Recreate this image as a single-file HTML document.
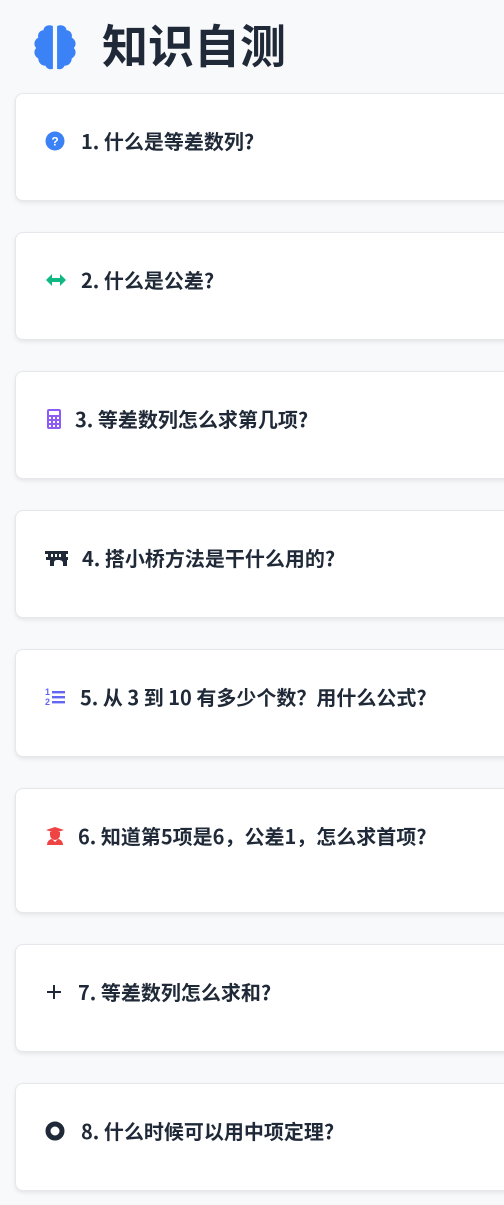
<!DOCTYPE html>
<html><head><meta charset="utf-8"><style>
body{margin:0;background:#f8f9fb;font-family:"Noto Sans CJK SC",sans-serif;width:504px;height:1205px;overflow:hidden;position:relative;color:#1f2937}
h1{position:absolute;left:102px;top:12px;margin:0;font-size:46px;line-height:64px;font-weight:700;color:#1f2937}
.brain{position:absolute;left:31px;top:23px}
.card{position:absolute;left:15px;width:520px;background:#fff;border:1px solid #e5e7eb;border-radius:8px;box-shadow:0 2px 4px rgba(0,0,0,.08)}
.q{position:absolute;top:33px;left:0;display:flex;align-items:center;font-size:20px;font-weight:700;line-height:28px;white-space:nowrap}
.q svg{position:absolute;left:29px;top:4px}
</style></head><body>
<svg class="brain" width="48" height="48" viewBox="0 0 46 46"><g fill="#3b82f6">
<path d="M21 3c-4-2-9 0-9 4-4 0-6 4-5 7-4 2-5 7-2 10-3 3-2 8 2 10 0 4 3 7 7 7 1 3 4 4 7 3z"/>
<path d="M25 3c4-2 9 0 9 4 4 0 6 4 5 7 4 2 5 7 2 10 3 3 2 8-2 10 0 4-3 7-7 7-1 3-4 4-7 3z"/></g></svg>
<h1>知识自测</h1>

<div class="card" style="top:93px;height:106px"><div class="q"><svg width="20" height="20" viewBox="0 0 20 20"><circle cx="10" cy="10" r="9.5" fill="#3b82f6"/><text x="10" y="14.5" font-size="12" font-weight="700" fill="#fff" text-anchor="middle" font-family="Liberation Sans">?</text></svg><span style="margin-left:65px">1. 什么是等差数列?</span></div></div>

<div class="card" style="top:232px;height:106px"><div class="q"><svg width="22" height="20" viewBox="0 0 22 20"><path d="M1 10l6-6v4h8V4l6 6-6 6v-4H7v4z" fill="#10b981"/></svg><span style="margin-left:65px">2. 什么是公差?</span></div></div>

<div class="card" style="top:371px;height:106px"><div class="q"><svg width="16" height="22" viewBox="0 0 16 22" style="left:30px;top:3px"><rect x="1" y="1" width="14" height="20" rx="2" fill="#8b5cf6"/><rect x="3" y="3" width="10" height="4" fill="#fff"/><g fill="#fff"><rect x="3" y="9" width="2" height="2"/><rect x="7" y="9" width="2" height="2"/><rect x="11" y="9" width="2" height="2"/><rect x="3" y="13" width="2" height="2"/><rect x="7" y="13" width="2" height="2"/><rect x="11" y="13" width="2" height="2"/><rect x="3" y="17" width="2" height="2"/><rect x="7" y="17" width="2" height="2"/><rect x="11" y="17" width="2" height="2"/></g></svg><span style="margin-left:59px">3. 等差数列怎么求第几项?</span></div></div>

<div class="card" style="top:510px;height:106px"><div class="q"><svg width="23" height="20" viewBox="0 0 23 20"><path d="M0 3h23v3h-2v3h2v3h-1v6h-4v-3c0-2-2-3-4.5-3S9 12 9 15v3H5v-6H1V9h2V6H0z M6 6v3h2V6z M10 6v3h2V6z M14 6v3h2V6z" fill="#1f2937" fill-rule="evenodd"/></svg><span style="margin-left:66px">4. 搭小桥方法是干什么用的?</span></div></div>

<div class="card" style="top:649px;height:106px"><div class="q"><svg width="20" height="20" viewBox="0 0 20 20"><text x="0" y="8" font-size="9" font-weight="700" fill="#6366f1" font-family="Liberation Sans">1</text><text x="0" y="18" font-size="9" font-weight="700" fill="#6366f1" font-family="Liberation Sans">2</text><rect x="7" y="4" width="13" height="2.4" fill="#6366f1"/><rect x="7" y="9" width="13" height="2.4" fill="#6366f1"/><rect x="7" y="14" width="13" height="2.4" fill="#6366f1"/></svg><span style="margin-left:64px">5. 从 3 到 10 有多少个数？用什么公式?</span></div></div>

<div class="card" style="top:788px;height:123px"><div class="q"><svg width="20" height="20" viewBox="0 0 20 20"><path d="M1 4l9-3 9 3-9 3z M5 6h10v3a5 5 0 0 1-10 0z M2 19c0-4 3-6 5-6l3 3 3-3c2 0 5 2 5 6z" fill="#ef4444"/></svg><span style="margin-left:62px">6. 知道第5项是6，公差1，怎么求首项?</span></div></div>

<div class="card" style="top:944px;height:106px"><div class="q"><svg width="18" height="20" viewBox="0 0 18 20"><path d="M8 3h2v6h6v2h-6v6H8v-6H2V9h6z" fill="#1f2937"/></svg><span style="margin-left:62px">7. 等差数列怎么求和?</span></div></div>

<div class="card" style="top:1083px;height:106px"><div class="q"><svg width="20" height="20" viewBox="0 0 20 20"><circle cx="10" cy="10" r="7" fill="none" stroke="#1f2937" stroke-width="5"/></svg><span style="margin-left:65px">8. 什么时候可以用中项定理?</span></div></div>
</body></html>
